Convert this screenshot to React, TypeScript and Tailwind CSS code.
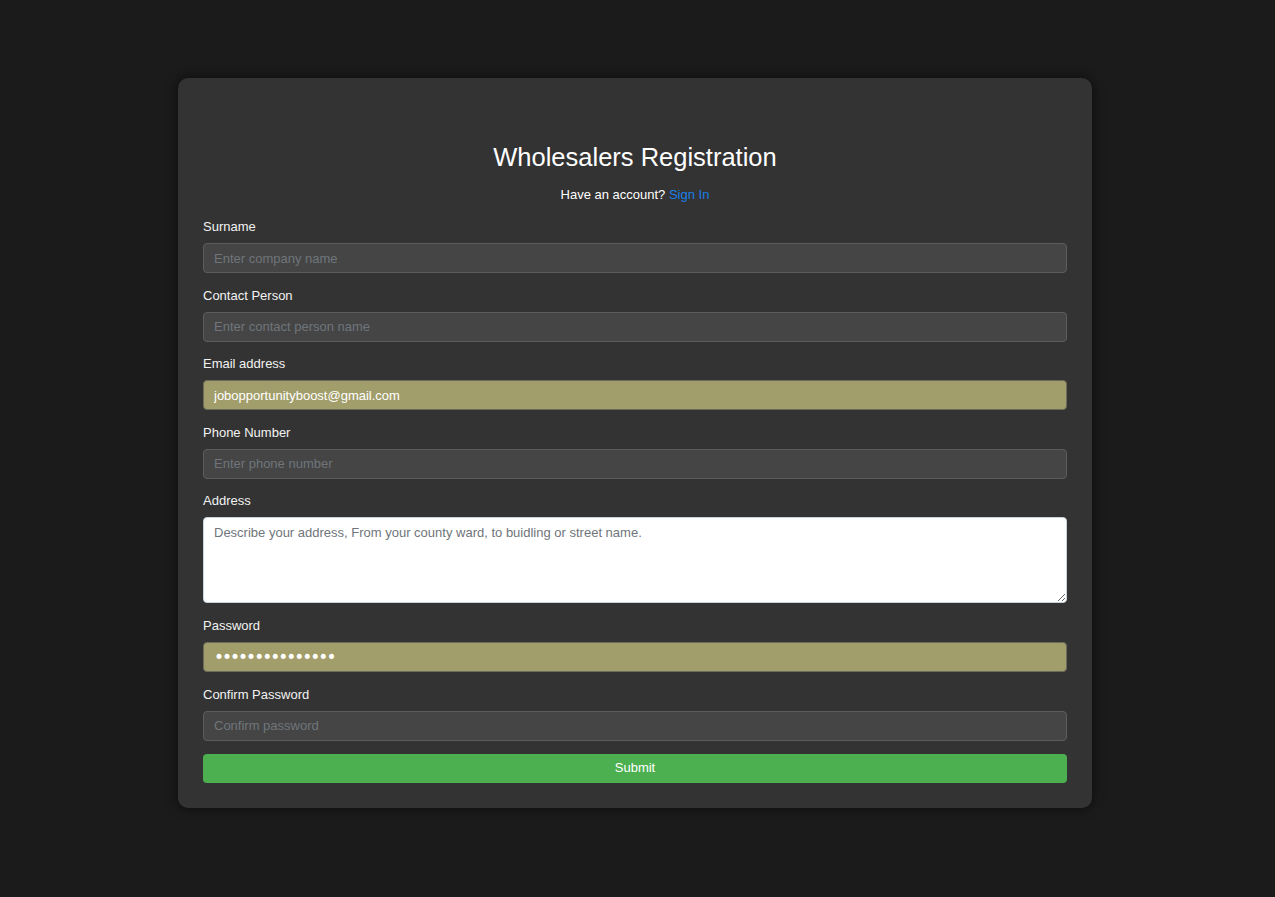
import React from 'react';

const fieldClass =
  'w-full h-[30px] rounded-[4px] border border-[#5c5c5c] bg-[#454545] px-[10px] text-[13px] text-white placeholder:text-[#6f757b] outline-none';

const filledClass =
  'w-full h-[30px] rounded-[4px] border border-[#6b6b5a] bg-[#a29e6b] px-[10px] text-[13px] text-white outline-none';

function Field({ label, children }: { label: string; children: React.ReactNode }) {
  return (
    <div className="mb-[13.6px]">
      <label className="block mb-[7px] text-[13px] leading-[18px] text-[#f2f2f2]">{label}</label>
      {children}
    </div>
  );
}

export default function App() {
  return (
    <div
      className="min-h-screen bg-[#1b1b1b] pt-[78px]"
      style={{ fontFamily: '"Liberation Sans", Arial, sans-serif' }}
    >
      <div className="ml-[178px] w-[914px] rounded-[10px] bg-[#333333] px-[25px] pt-[64px] pb-[25px] shadow-[0_0_12px_rgba(0,0,0,0.6)]">
        <h2 className="text-center text-[25.5px] leading-[30px] text-white">Wholesalers Registration</h2>
        <p className="mt-[14px] mb-[14px] text-center text-[13px] leading-[18px] text-white">
          Have an account? <a className="text-[#1a7fe8] cursor-pointer">Sign In</a>
        </p>

        <form onSubmit={(e) => e.preventDefault()}>
          <Field label="Surname">
            <input type="text" placeholder="Enter company name" className={fieldClass} />
          </Field>

          <Field label="Contact Person">
            <input type="text" placeholder="Enter contact person name" className={fieldClass} />
          </Field>

          <Field label="Email address">
            <input
              type="email"
              defaultValue="jobopportunityboost@gmail.com"
              readOnly
              className={filledClass}
            />
          </Field>

          <Field label="Phone Number">
            <input type="tel" placeholder="Enter phone number" className={fieldClass} />
          </Field>

          <Field label="Address">
            <textarea
              placeholder="Describe your address, From your county ward, to buidling or street name."
              className="block w-full h-[86px] rounded-[4px] border border-[#c8d3dc] bg-white px-[10px] pt-[7px] pb-[6px] text-[13px] leading-[15px] text-[#333] placeholder:text-[#6f757b] outline-none"
            />
          </Field>

          <Field label="Password">
            <input
              type="password"
              defaultValue="aaaaaaaaaaaaaaa"
              readOnly
              className={filledClass + ' font-["DejaVu_Sans"] !text-[17px] tracking-[-2px]'}
            />
          </Field>

          <div className="mb-[13px]">
            <label className="block mb-[7px] text-[13px] leading-[18px] text-[#f2f2f2]">Confirm Password</label>
            <input type="password" placeholder="Confirm password" className={fieldClass} />
          </div>

          <button
            type="submit"
            className="block w-full h-[29px] rounded-[4px] bg-[#4caf50] text-[13px] text-white"
          >
            Submit
          </button>
        </form>
      </div>
    </div>
  );
}
